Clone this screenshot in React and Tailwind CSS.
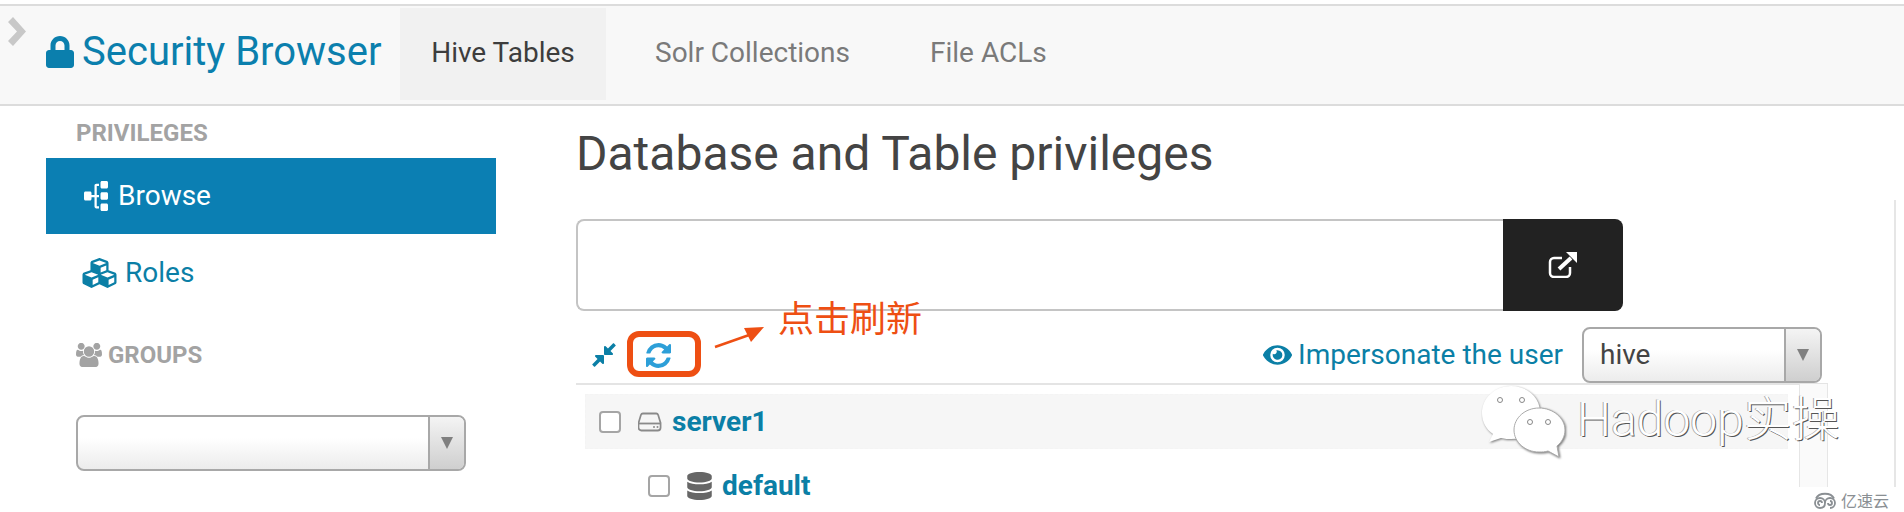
import React from 'react';
import { FaLock, FaSitemap, FaCubes, FaEye, FaDatabase } from 'react-icons/fa';

const font = { fontFamily: 'Roboto, sans-serif' };

function Compress({ className }) {
  return (
    <svg viewBox="0 0 1792 1792" className={className} fill="currentColor">
      <path d="M896 960v448q0 26-19 45t-45 19-45-19l-144-144-332 332q-10 10-23 10t-23-10l-114-114q-10-10-10-23t10-23l332-332-144-144q-19-19-19-45t19-45 45-19h448q26 0 45 19t19 45zm755-672q0 13-10 23l-332 332 144 144q19 19 19 45t-19 45-45 19h-448q-26 0-45-19t-19-45v-448q0-26 19-45t45-19 45 19l144 144 332-332q10-10 23-10t23 10l114 114q10 10 10 23z" />
    </svg>
  );
}

function Refresh({ className }) {
  return (
    <svg viewBox="128 128 1536 1536" className={className} fill="currentColor">
      <path d="M1639 1056q0 5-1 7-64 268-268 434.500t-478 166.500q-146 0-282.500-55t-243.500-157l-129 129q-19 19-45 19t-45-19-19-45v-448q0-26 19-45t45-19h448q26 0 45 19t19 45-19 45l-137 137q71 66 161 102t187 36q134 0 250-65t186-179q11-17 53-117 8-23 30-23h192q13 0 22.500 9.500t9.500 22.500zm25-800v448q0 26-19 45t-45 19h-448q-26 0-45-19t-19-45 19-45l138-138q-148-137-349-137-134 0-250 65t-186 179q-11 17-53 117-8 23-30 23h-199q-13 0-22.500-9.500t-9.500-22.500v-7q65-268 270-434.500t480-166.500q146 0 284 55.500t245 156.500l130-129q19-19 45-19t45 19 19 45z" />
    </svg>
  );
}

function Users({ className }) {
  return (
    <svg viewBox="0 128 1920 1536" className={className} fill="currentColor">
      <path d="M593 896q-162 5-265 128h-134q-82 0-138-40.500t-56-118.500q0-353 124-353 6 0 43.500 21t97.500 42.500 119 21.500q67 0 133-23-5 37-5 66 0 139 81 256zm1071 637q0 120-73 189.500t-194 69.500h-874q-121 0-194-69.500t-73-189.500q0-53 3.500-103.500t14-109 26.500-108.500 43-97.500 62-81 85.500-53.500 111.500-20q10 0 43 21.500t73 48 107 48 135 21.500 135-21.500 107-48 73-48 43-21.500q61 0 111.500 20t85.500 53.500 62 81 43 97.500 26.500 108.500 14 109 3.500 103.500zm-1024-1277q0 106-75 181t-181 75-181-75-75-181 75-181 181-75 181 75 75 181zm704 384q0 159-112.500 271.500t-271.500 112.500-271.500-112.500-112.500-271.500 112.500-271.500 271.500-112.500 271.500 112.500 112.500 271.500zm576 225q0 78-56 118.500t-138 40.500h-134q-103-123-265-128 81-117 81-256 0-29-5-66 66 23 133 23 59 0 119-21.500t97.500-42.500 43.500-21q124 0 124 353zm-128-609q0 106-75 181t-181 75-181-75-75-181 75-181 181-75 181 75 75 181z" />
    </svg>
  );
}

function Hdd({ className }) {
  return (
    <svg viewBox="0 0 24 20" className={className} fill="none" stroke="currentColor" strokeWidth="1.800">
      <path d="M5.500 1.500h13q1.500 0 2 1.500l2.500 8v4.500a3 3 0 0 1-3 3H3a3 3 0 0 1-3-3V11l2.500-8q.5-1.500 2-1.500z" transform="translate(.5 0) scale(.96 1)" />
      <path d="M1 11.500h22" />
      <circle cx="16" cy="15" r="1" fill="currentColor" stroke="none" />
      <circle cx="19.500" cy="15" r="1" fill="currentColor" stroke="none" />
    </svg>
  );
}

function ExternalLink({ className }) {
  return (
    <svg viewBox="0 0 30 26" className={className} fill="none" stroke="currentColor" strokeWidth="2.500">
      <path d="M22 15v6a4 4 0 0 1-4 4H6a4 4 0 0 1-4-4V10a4 4 0 0 1 4-4h8" />
      <path d="M11 17L23 6" strokeWidth="4" />
      <path d="M18 0h11v11z" fill="currentColor" stroke="none" />
    </svg>
  );
}

function Dropdown({ value, className }) {
  return (
    <div className={`flex items-stretch rounded-lg border-2 border-[#a8a8a8] bg-gradient-to-b from-white from-40% to-[#ececec] ${className}`}>
      <div className="flex flex-1 items-center pl-4 text-[28px] text-[#444]">{value}</div>
      <div className="flex w-[36px] items-center justify-center rounded-r-md border-l-2 border-[#a8a8a8] bg-gradient-to-b from-[#f4f4f4] to-[#cfcfcf]">
        <span className="h-0 w-0 border-x-[6px] border-t-[12px] border-x-transparent border-t-[#808080]" />
      </div>
    </div>
  );
}

function Wechat() {
  return (
    <svg viewBox="0 0 84 73" className="h-[73px] w-[84px]" style={{ filter: 'drop-shadow(1px 1px 1px #777)' }}>
      <path d="M30 1C14 1 1 13 1 28c0 9 4 16 11 21l-4 8 12-4c4 1 7 1 10 1 16 0 29-12 29-27S46 1 30 1z" fill="#fff" />
      <circle cx="19" cy="15" r="2.500" fill="#fff" stroke="#888" />
      <circle cx="41" cy="15" r="2.500" fill="#fff" stroke="#888" />
      <path d="M58 23c-14 0-25 10-25 22s11 22 25 22c3 0 6 0 9-1l11 6-2-11c5-4 8-10 8-16 0-12-12-22-26-22z" fill="#fff" stroke="#aaa" />
      <circle cx="49" cy="37" r="2.500" fill="#fff" stroke="#888" />
      <circle cx="67" cy="37" r="2.500" fill="#fff" stroke="#888" />
    </svg>
  );
}

function CloudLogo() {
  return (
    <svg viewBox="0 0 28 18" className="h-[18px] w-[28px]" fill="none" stroke="#8a8f93" strokeWidth="1.800">
      <path d="M5 7.500a9.500 7 0 0 1 18 0" />
      <path d="M14 12a5 5 0 1 0-5 5c3 0 5-2 5-5a5 5 0 1 1 5 5" />
      <path d="M9 14a2 2 0 1 1 2-2" />
      <path d="M19 10a2 2 0 1 1-2 2" />
    </svg>
  );
}

export default function App() {
  return (
    <div className="relative h-[512px] w-[1904px] overflow-hidden bg-white" style={font}>
      {/* top bar */}
      <div className="mt-1 flex h-[102px] items-stretch border-y-2 border-[#dcdcdc] bg-[#f8f8f8]">
        <div className="flex w-[400px] items-start pl-[8px] pt-[11px]">
          <svg viewBox="0 0 18 29" className="h-[29px] w-[18px] text-[#c8c8c8]" fill="currentColor">
            <path d="M0 5L5 0l13 14.500L5 29l-5-5 9-9.500z" />
          </svg>
          <div className="ml-[20px] flex items-center pt-[11px] text-[#0b7fad]">
            <FaLock className="h-[32px] w-[28px]" />
            <span className="ml-[8px] whitespace-nowrap text-[40px] leading-[48px]">Security Browser</span>
          </div>
        </div>
        <div className="mb-[4px] mt-[2px] flex w-[206px] items-center justify-center bg-[#f1f1f1] pb-[3px] text-[28px] text-[#3d3d3d]">Hive Tables</div>
        <div className="flex items-center pb-[4px] pl-[49px] text-[28px] text-[#7a7a7a]">Solr Collections</div>
        <div className="flex items-center pb-[4px] pl-[80px] text-[28px] text-[#7a7a7a]">File ACLs</div>
      </div>

      <div className="flex">
        {/* sidebar */}
        <div className="ml-[46px] w-[450px]">
          <div className="pl-[30px] pt-[13px] text-[24px] font-bold leading-[28px] text-[#a3a3a3]">PRIVILEGES</div>
          <div className="mt-[11px] flex h-[76px] items-center bg-[#0b7fb3] pl-[35px] text-[28px] text-white">
            <FaSitemap className="h-[30px] w-[30px] -rotate-90" />
            <span className="ml-[7px]">Browse</span>
          </div>
          <div className="mt-[21px] flex h-[36px] items-center pl-[36px] text-[28px] text-[#0b7fa6]">
            <FaCubes className="h-[34px] w-[35px]" />
            <span className="ml-[8px]">Roles</span>
          </div>
          <div className="mt-[50px] flex items-center pl-[30px] text-[24px] font-bold leading-[28px] text-[#a3a3a3]">
            <Users className="h-[24px] w-[26px]" />
            <span className="ml-[6px]">GROUPS</span>
          </div>
          <Dropdown value="" className="ml-[30px] mt-[46px] h-[56px] w-[390px]" />
        </div>

        {/* main */}
        <div className="ml-[80px] w-[1252px]">
          <h1 className="pt-[18px] text-[48px] font-normal leading-[60px] text-[#444]">Database and Table privileges</h1>
          <div className="mt-[35px] flex h-[92px] w-[1047px]">
            <div className="flex-1 rounded-l-lg border-2 border-r-0 border-[#c4c4c4]" />
            <div className="flex w-[120px] items-center justify-center rounded-r-lg bg-[#222] text-white">
              <ExternalLink className="h-[26px] w-[30px]" />
            </div>
          </div>
          <div className="flex h-[74px] items-center border-b-2 border-[#e4e4e4] pt-[16px]">
            <Compress className="ml-[14px] h-[28px] w-[28px] text-[#0b7fa6]" />
            <Refresh className="ml-[28px] h-[25px] w-[25px] text-[#2d9fd8]" />
            <FaEye className="ml-auto h-[26px] w-[29px] text-[#0b7fa6]" />
            <span className="ml-[6px] text-[28px] text-[#0b7fa6]">Impersonate the user</span>
            <Dropdown value="hive" className="ml-[19px] mr-[6px] h-[56px] w-[240px]" />
          </div>
          <div className="ml-[9px] mt-[9px] flex h-[55px] w-[1203px] items-center border border-dashed border-[#f4f4f4] bg-[#f6f6f6]">
            <span className="ml-[13px] h-[22px] w-[22px] rounded-[4px] border-2 border-[#a5a5a5] bg-white" />
            <Hdd className="ml-[17px] h-[20px] w-[24px] text-[#8a8a8a]" />
            <span className="ml-[10px] text-[28px] font-bold text-[#0b7fa6]">server1</span>
          </div>
          <div className="ml-[72px] mt-[13px] flex h-[48px] items-center">
            <span className="h-[22px] w-[22px] rounded-[4px] border-2 border-[#a5a5a5] bg-white" />
            <FaDatabase className="ml-[17px] h-[28px] w-[25px] text-[#666]" />
            <span className="ml-[10px] text-[28px] font-bold text-[#0b7fa6]">default</span>
          </div>
        </div>
      </div>

      {/* scroll strip and right rule */}
      <div className="absolute left-[1799px] top-[384px] h-[103px] w-[29px] border-x border-[#e6e6e6] bg-[#fafafa]" />
      <div className="absolute left-[1894px] top-[200px] h-[287px] w-[2px] bg-[#e6e6e6]" />

      {/* annotation */}
      <div className="absolute left-[627px] top-[331px] h-[46px] w-[74px] rounded-[12px] border-[6px] border-[#ee4f13]" />
      <svg viewBox="0 0 52 24" className="absolute left-[714px] top-[325px] h-[24px] w-[52px]">
        <path d="M1 22L38 9" stroke="#ee4f13" strokeWidth="2.500" />
        <path d="M50 2L30 3l7 14z" fill="#ee4f13" />
      </svg>
      <span className="absolute left-[778px] top-[291px] text-[36px] leading-[50px] text-[#ee4f13]" style={{ fontFamily: '"Noto Sans CJK SC", sans-serif' }}>点击刷新</span>

      {/* watermark */}
      <div className="absolute left-[1481px] top-[385px] flex items-start">
        <Wechat />
        <span className="ml-[12px] mt-[3px] whitespace-nowrap text-[48px] font-light leading-[64px] text-white" style={{ fontFamily: 'Roboto, "Noto Sans CJK SC", sans-serif', textShadow: '1px 1px 0 #555, -1px 0 0 #aaa' }}>Hadoop实操</span>
      </div>
      <div className="absolute bottom-0 right-0 flex h-[25px] w-[114px] items-center justify-end bg-white pr-[15px] text-[16px] leading-none text-[#8a8f93]" style={{ fontFamily: '"Noto Sans CJK SC", sans-serif' }}>
        <CloudLogo />
        <span className="ml-[2px]">亿速云</span>
      </div>
    </div>
  );
}
